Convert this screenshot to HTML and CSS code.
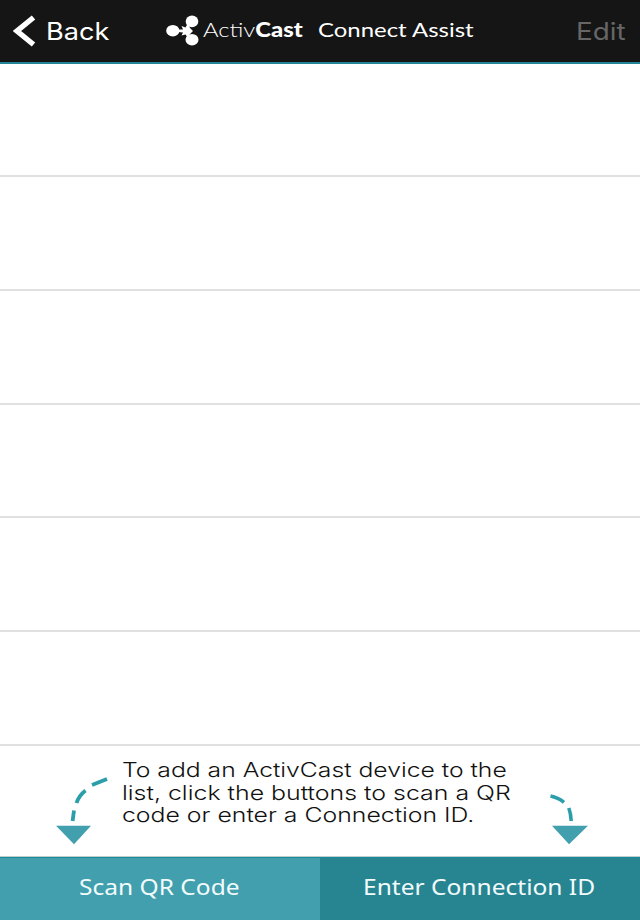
FILE: index.html
```html
<!DOCTYPE html>
<html lang="en">
<head>
    <meta charset="UTF-8">
    <meta name="viewport" content="width=device-width, initial-scale=1.0">
    <title>ActivCast Connect Assist</title>
    <link rel="stylesheet" href="styles.css">
</head>
<body>
    <header class="header">
        <div class="back">
            <svg class="chevron" width="23" height="32" viewBox="0 0 23 32">
                <path d="M20.5 2.5 L4 16 L20.5 29.5" fill="none" stroke="#fff" stroke-width="5.4"/>
            </svg>
            <span class="back-label">Back</span>
        </div>
        <div class="brand">
            <svg class="logo" width="34" height="32" viewBox="0 0 34 32">
                <g fill="#fff">
                    <ellipse cx="6.8" cy="15.7" rx="6.6" ry="5.8"/>
                    <ellipse cx="26" cy="6.4" rx="6.3" ry="5.8"/>
                    <ellipse cx="26" cy="24.7" rx="6.5" ry="5.8"/>
                    <path d="M12 14.5 L17 14.5 L15.5 11 L19.5 12.5 L22 8 L24 13 L27 16 L24 19 L22 23 L19.5 19.5 L15.5 20.5 L17 17.5 L12 17 Z"/>
                </g>
            </svg>
            <span class="brand-name">Activ<b>Cast</b></span>
            <span class="brand-sub">Connect Assist</span>
        </div>
        <div class="edit"><span class="edit-label">Edit</span></div>
    </header>

    <ul class="devices">
        <li></li>
        <li></li>
        <li></li>
        <li></li>
        <li></li>
        <li></li>
    </ul>

    <div class="hint">
        <svg class="arrow-left" width="56" height="72" viewBox="0 0 56 72">
            <path d="M51 4 L36 10 M29.5 15.5 Q23 20.5 20.5 28 M18 35.5 L16.6 46" fill="none" stroke="#2b9dab" stroke-width="3.8"/>
            <path d="M0 50.7 H35 L18 69.3 Z" fill="#419fae"/>
        </svg>
        <p class="hint-text">
            <span class="line line-1">To add an ActivCast device to the</span>
            <span class="line line-2">list, click the buttons to scan a QR</span>
            <span class="line line-3">code or enter a Connection ID.</span>
        </p>
        <svg class="arrow-right" width="40" height="54" viewBox="0 0 40 54">
            <path d="M.5 3 Q8 4.5 14 9.3 M18.8 15 Q21 21 21.2 28" fill="none" stroke="#2b9dab" stroke-width="3.6"/>
            <path d="M2 32.7 H38 L19 51.3 Z" fill="#419fae"/>
        </svg>
    </div>

    <footer class="actions">
        <div class="button scan"><span class="scan-label">Scan QR Code</span></div>
        <div class="button enter"><span class="enter-label">Enter Connection ID</span></div>
    </footer>
</body>
</html>
```

FILE: styles.css
```css
* {
    box-sizing: border-box;
}

body {
    margin: 0;
    height: 920px;
    display: flex;
    flex-direction: column;
    overflow: hidden;
    background: #fff;
    font-family: Inter, "Liberation Sans", sans-serif;
}

span {
    display: inline-block;
    white-space: nowrap;
    transform-origin: left center;
}

.header {
    height: 64px;
    flex: none;
    display: grid;
    grid-template-columns: 166px 1fr 64px;
    background: #151515;
    border-bottom: 2px solid #218595;
    color: #fff;
}

.back {
    display: flex;
    padding: 15px 0 0 13px;
}

.back-label,
.edit-label {
    margin-top: 1px;
    font-size: 24px;
    line-height: 32px;
}

.back-label {
    margin-left: 10px;
    transform: scaleX(1.13);
}

.brand {
    display: grid;
    grid-template-columns: 37px 115px 1fr;
    padding-top: 15px;
    font-family: Lato, sans-serif;
    line-height: 30px;
}

.brand-name {
    justify-self: start;
    margin-top: -1px;
    font-size: 20px;
    font-weight: 300;
    transform: scaleX(1.19);
}

.brand-name b {
    font-weight: 900;
}

.brand-sub {
    justify-self: start;
    font-size: 19px;
    transform: scaleX(1.26);
}

.edit {
    padding-top: 15px;
    color: #666;
}

.edit-label {
    transform: scaleX(1.16);
}

.devices {
    height: 682px;
    flex: none;
    margin: 0;
    padding: 0;
    list-style: none;
    display: grid;
    grid-template-rows: 113px repeat(5, 1fr);
}

.devices li {
    border-bottom: 2px solid #e0e0e0;
}

.hint {
    height: 111px;
    flex: none;
    display: flex;
    border-bottom: 1px solid #c5cccd;
}

.arrow-left {
    flex: none;
    margin: 29px 0 0 56px;
}

.hint-text {
    width: 428px;
    margin: 13px 0 0 10px;
    font-size: 20px;
    font-weight: 300;
    line-height: 22.5px;
    color: #111;
}

.line {
    display: block;
    width: max-content;
}

.line-1 {
    transform: scaleX(1.235);
}

.line-2 {
    transform: scaleX(1.245);
}

.line-3 {
    transform: scaleX(1.24);
}

.arrow-right {
    flex: none;
    margin-top: 47px;
}

.actions {
    flex: 1;
    display: grid;
    grid-template-columns: 1fr 1fr;
    color: #f2fbfc;
    font-family: "Noto Sans", sans-serif;
    font-size: 22px;
    line-height: 30px;
}

.button {
    padding-top: 13px;
    border-top: 1px solid #178d9c;
}

.scan {
    padding-left: 79px;
    background: #419fae;
}

.enter {
    padding-left: 43px;
    background: #278591;
}

.scan-label {
    transform: scaleX(1.115);
}

.enter-label {
    transform: scaleX(1.115);
}
```
